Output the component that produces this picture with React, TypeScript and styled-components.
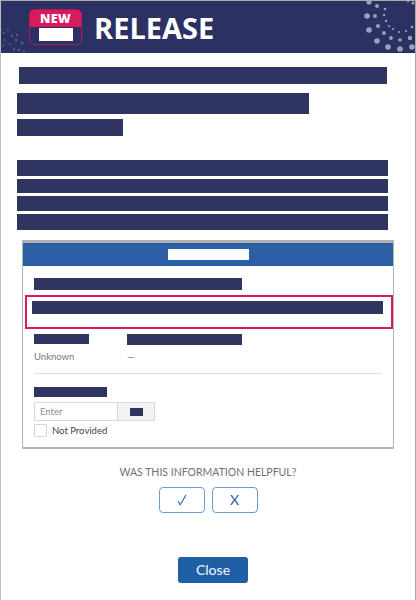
import React from "react";
import styled, { createGlobalStyle } from "styled-components";

const Global = createGlobalStyle`
  html, body { margin: 0; padding: 0; background: #fff; }
  body { font-family: Lato, "Liberation Sans", sans-serif; }
`;

const Page = styled.div`
  width: 416px; height: 600px; box-sizing: border-box; overflow: hidden;
  background: #fff; border-top: 1px solid #a9a9a9; border-right: 1px solid #a9a9a9; border-left: 1px solid #bdbdbd;
`;
const Banner = styled.header`
  height: 52px; background: #2b3263; display: flex; align-items: flex-start; padding: 8px 0 0 28px;
  box-sizing: border-box; position: relative; overflow: hidden; gap: 12px;
`;
const Badge = styled.div`
  width: 53px; height: 36px; box-sizing: border-box; border: 1px solid #a81c5a; border-radius: 5px; overflow: hidden;
  display: flex; flex-direction: column; align-items: center; background: #2b3263; position: relative;
`;
const BadgeTop = styled.div`
  height: 17px; width: 100%; background: #d81b5c; color: #fff; font: 800 12.5px/17px "Open Sans", sans-serif; text-align: center; letter-spacing: .2px;
`;
const BadgeBlock = styled.div`
  width: 34px; height: 13px; background: #fff; position: absolute; left: 9px; top: 18px;
`;
const Title = styled.div`
  color: #fff; font: 700 29px/36px "Open Sans", sans-serif; margin-top: 1px; position: relative;
`;
const Dots = styled.svg`
  position: absolute; top: -1px; left: -1px;
`;
const Body = styled.main`
  display: flex; flex-direction: column; align-items: flex-start; padding-left: 16px; padding-top: 14px;
`;
const Bar = styled.div`
  background: #2f3560; width: ${p => p.$w}px; height: ${p => p.$h}px;
  margin-left: ${p => p.$ml ?? 0}px; margin-top: ${p => p.$mt ?? 0}px; flex: none;
`;
const Card = styled.section`
  margin: 10px 0 0 5px; width: 372px; height: 209px; box-sizing: border-box;
  border: 1px solid #b5b5b5; border-top: 3px solid #b0b0b0; border-bottom-width: 2px; background: #fff; display: flex; flex-direction: column; align-items: flex-start;
`;
const CardHead = styled.div`
  align-self: stretch; height: 23px; background: #2a5fa5; display: flex; justify-content: center; align-items: center; flex: none;
`;
const HeadBar = styled.div`
  width: 81px; height: 11px; background: #fff;
`;
const Alert = styled.div`
  margin: 5px 0 0 2px; width: 368px; height: 34px; box-sizing: border-box; border: 2px solid #d81b5c;
  padding: 4px 0 0 5px;
`;
const Pair = styled.div`
  display: grid; grid-template-columns: 93px auto; margin: 5px 0 0 11px; align-items: start;
`;
const Muted = styled.div`
  color: #77797e; font-size: 9.5px; line-height: 12px; margin-top: 6px;
`;
const Rule = styled.div`
  width: 348px; height: 1px; background: #dedede; margin: 10px 0 0 11px;
`;
const InputRow = styled.div`
  display: flex; margin: 5px 0 0 11px; height: 19px; box-sizing: border-box; border: 1px solid #d9d9d9;
`;
const Enter = styled.div`
  width: 83px; box-sizing: border-box; padding-left: 5px; color: #8a8c90; font-size: 9.5px; line-height: 17px; border-right: 1px solid #d9d9d9;
`;
const Addon = styled.div`
  width: 36px; background: #f3f3f3; display: flex; align-items: center; justify-content: center;
`;
const CheckRow = styled.label`
  display: flex; align-items: center; margin: 3px 0 0 11px; gap: 5px; color: #3c3f52; font-size: 9.5px; line-height: 13px;
`;
const Box = styled.span`
  width: 13px; height: 13px; box-sizing: border-box; border: 1px solid #d5d5d5; border-radius: 1px; background: #fff;
`;
const Feedback = styled.div`
  display: flex; flex-direction: column; align-items: center; width: 414px; margin-left: -16px;
`;
const Question = styled.div`
  margin-top: 16px; color: #6f7175; font-size: 10.5px; line-height: 14px; text-align: center;
`;
const Votes = styled.div`
  display: flex; gap: 7px; margin-top: 8px;
`;
const Vote = styled.button`
  width: 46px; height: 26px; border: 1px solid #6f9bcc; border-radius: 4px; background: #fff; color: #2a5fa5;
  font: 400 14px/1 Lato, sans-serif; padding: 0; display: flex; align-items: center; justify-content: center;
`;
const Check = styled.svg`
  display: block;
`;
const CloseBtn = styled.button`
  margin-top: 44px; width: 70px; height: 26px; border: 0; border-radius: 3px; background: #1f5fa6; color: #e8eef6;
  font: 500 14px/26px Lato, sans-serif; padding: 0; margin-left: 10px;
`;

const rightDots: [number, number, number][] = [
  [369, 2, 2.6], [377, 6, 2], [385, 9, 1.3], [408, 1, 1.2], [413, 3, 1.5], [367, 16, 2.8], [375, 16, 1.9], [384, 15, 1.2],
  [386, 21, 1.2], [369, 30, 2.8], [378, 26, 2], [389, 26, 1.1], [393, 29, 1.1], [399, 32, 1.1], [406, 31, 1.1], [412, 27, 1.3],
  [384, 33, 1.9], [377, 41, 2.8], [391, 38, 1.9], [400, 40, 1.8], [410, 38, 2.2], [388, 47, 2.8], [400, 49, 2.8], [412, 47, 2.8],
];
const leftDots: [number, number, number][] = [
  [1, 29, 1], [4, 33, 1], [8, 30, 1], [12, 36, 1.2], [17, 35, 1.2], [5, 40, 1], [10, 44, 1.1], [16, 40, 1.3], [22, 43, 1.5], [14, 49, 1.2], [19, 50, 1.2], [24, 51, 1.1], [3, 46, 1],
];

export default function App() {
  return (
    <Page>
      <Global />
      <Banner>
        <Dots width="417" height="53" viewBox="0 0 417 53">
          {rightDots.map(([x, y, r], i) => <circle key={i} cx={x} cy={y} r={r} fill="#9da1ba" />)}
          {leftDots.map(([x, y, r], i) => <circle key={`l${i}`} cx={x} cy={y} r={r} fill="#565c84" />)}
        </Dots>
        <Badge>
          <BadgeTop>NEW</BadgeTop>
          <BadgeBlock />
        </Badge>
        <Title>RELEASE</Title>
      </Banner>
      <Body>
        <Bar $w={368} $h={17} $ml={2} />
        <Bar $w={292} $h={21} $mt={9} />
        <Bar $w={106} $h={17} $mt={5} />
        <Bar $w={371} $h={16} $mt={24} />
        <Bar $w={371} $h={14} $mt={3} />
        <Bar $w={371} $h={15} $mt={3} />
        <Bar $w={371} $h={16} $mt={3} />
        <Card>
          <CardHead><HeadBar /></CardHead>
          <Bar $w={208} $h={12} $ml={11} $mt={12} />
          <Alert><Bar $w={351} $h={13} /></Alert>
          <Pair>
            <Bar $w={55} $h={10} />
            <Bar $w={115} $h={11} />
            <Muted>Unknown</Muted>
            <Muted>—</Muted>
          </Pair>
          <Rule />
          <Bar $w={73} $h={10} $ml={11} $mt={13} />
          <InputRow>
            <Enter>Enter</Enter>
            <Addon><Bar $w={13} $h={8} /></Addon>
          </InputRow>
          <CheckRow><Box />Not Provided</CheckRow>
        </Card>
        <Feedback>
          <Question>WAS THIS INFORMATION HELPFUL?</Question>
          <Votes>
            <Vote>
              <Check width="10" height="12" viewBox="0 0 10 12" fill="none" stroke="#2a5fa5" strokeWidth="1.1">
                <path d="M1 7.2 L3.2 10.8 L9 1" />
              </Check>
            </Vote>
            <Vote>X</Vote>
          </Votes>
          <CloseBtn>Close</CloseBtn>
        </Feedback>
      </Body>
    </Page>
  );
}
